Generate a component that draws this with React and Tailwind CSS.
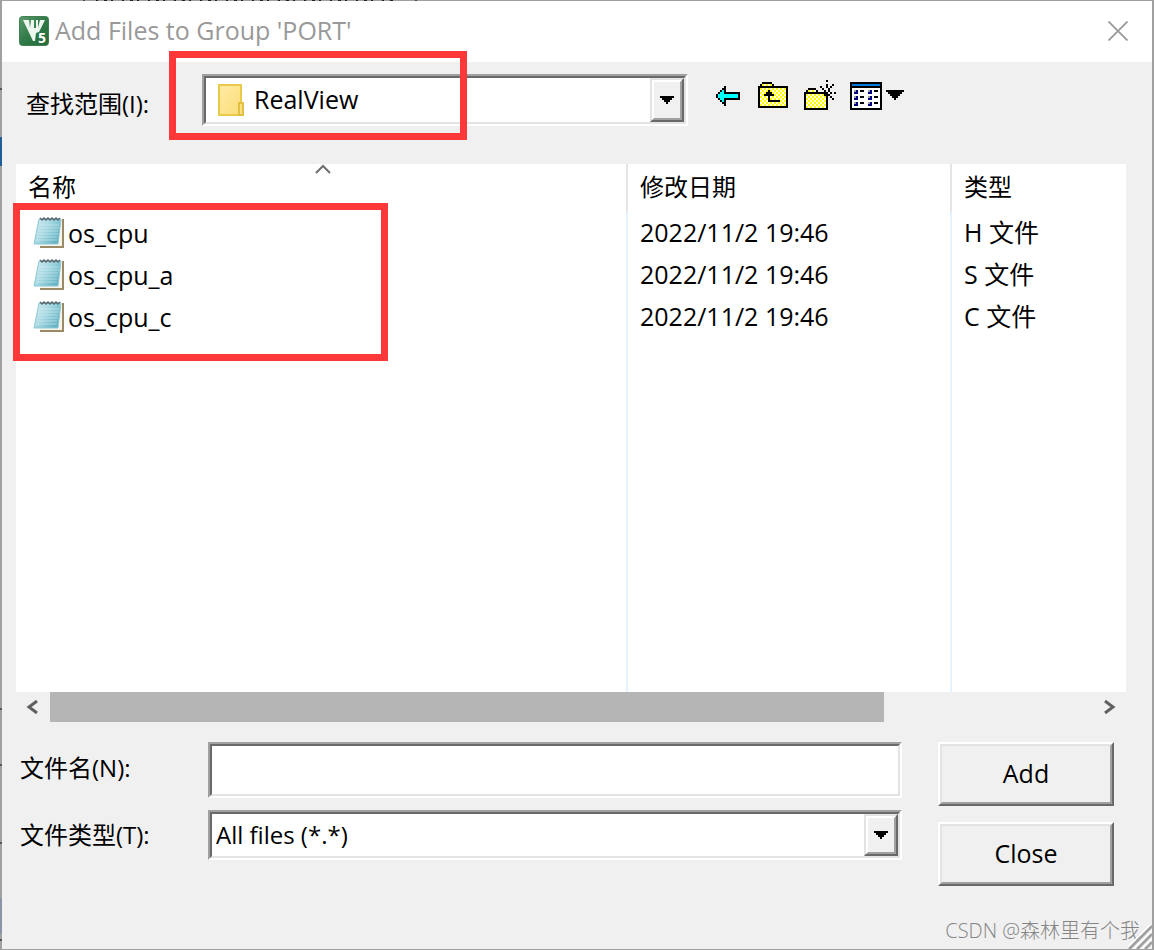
import { useState } from "react";

const FILES = [
  { name: "os_cpu", date: "2022/11/2 19:46", type: "H 文件" },
  { name: "os_cpu_a", date: "2022/11/2 19:46", type: "S 文件" },
  { name: "os_cpu_c", date: "2022/11/2 19:46", type: "C 文件" },
];

const PALETTE = {
  K: "#000000",
  C: "#00ffff",
  Y: "#ffff00",
  L: "#fffbe0",
  W: "#ffffff",
  B: "#0078d7",
  N: "#000080",
  G: "#a0a0a0",
};

const BACK = [
  "",
  "",
  "",
  "......K",
  ".....KK",
  "....KCK",
  "...KCCKKKKKKKK",
  "..KCCCCCCCCCCK",
  "..KCCCCCCCCCCK",
  "...KCCKKKKKKKK",
  "....KCK",
  ".....KK",
  "......K",
];

const UP = [
  "",
  "..KKKKK",
  ".KYLYLYK",
  "KKKKKKKKKKKKKKK",
  "KYLYLYLYLYLYLYK",
  "KLYLYKYLYLYLYLK",
  "KYLYKKKYLYLYLYK",
  "KLYKKKKKYLYLYLK",
  "KYLYLKLYLYLYLYK",
  "KLYLYKYLYLYLYLK",
  "KYLYLKKKKKKYLYK",
  "KLYLYLYLYLYLYLK",
  "KYLYLYLYLYLYLYK",
  "KKKKKKKKKKKKKKK",
];

const NEW_FOLDER = [
  "...........K",
  "",
  "...........K..K",
  "........K..K.K",
  "..KKKK...K..K",
  ".KYLYLK...K.K",
  "KKKKKKKKKKKK.K.K",
  "KYLYLYLYLYKKK",
  "KLYLYLYLYLYK.K",
  "KYLYLYLYLYLK..K",
  "KLYLYLYLYLYK",
  "KYLYLYLYLYLK",
  "KLYLYLYLYLYK",
  "KYLYLYLYLYLK",
  "KKKKKKKKKKKK",
];

const VIEW = [
  "",
  "KKKKKKKKKKKKKKKK",
  "KBBBBBBBBBBBBBBK",
  "KKKKKKKKKKKKKKKK",
  "KWWWWWWWWWWWWWWK",
  "KWGNWKKWWGNWKKWK..KKKKKKKKK",
  "KWNNWWWWWNNWWWWK...KKKKKKK",
  "KWWWWWWWWWWWWWWK....KKKKK",
  "KWGNWKKWWGNWKKWK.....KKK",
  "KWNNWWWWWNNWWWWK......K",
  "KWWWWWWWWWWWWWWK",
  "KWGNWKKWWGNWKKWK",
  "KWNNWWWWWNNWWWWK",
  "KWWWWWWWWWWWWWWK",
  "KKKKKKKKKKKKKKKK",
];

function PixelIcon({ rows, cols = 16 }) {
  return (
    <svg width={cols * 2} height="32" viewBox={`0 0 ${cols} 16`} shapeRendering="crispEdges">
      {rows.flatMap((row, y) =>
        [...row].map((c, x) =>
          c === "." ? null : <rect key={`${x}-${y}`} x={x} y={y} width="1" height="1" fill={PALETTE[c]} />
        )
      )}
    </svg>
  );
}

function LogoIcon() {
  return (
    <svg width="30" height="30" viewBox="0 0 30 30">
      <defs>
        <linearGradient id="logo" x1="0" y1="0" x2="1" y2="1">
          <stop offset="0" stopColor="#5d9a6c" />
          <stop offset="0.5" stopColor="#2f7a46" />
          <stop offset="1" stopColor="#256a3b" />
        </linearGradient>
      </defs>
      <rect x="0.5" y="0.5" width="29" height="29" rx="3" fill="url(#logo)" stroke="#3f7f52" />
      <path d="M4 4h6l1 8 1-8h3v8h2V4h2v8l2-8h5l-6 12-3 1-1 8h-2z" fill="#eef6f0" />
      <text x="19" y="27" fontSize="14" fontWeight="700" fill="#ffffff" className="font-['Open_Sans',sans-serif]">
        5
      </text>
    </svg>
  );
}

function FolderIcon() {
  return (
    <svg width="26" height="32" viewBox="0 0 26 32">
      <defs>
        <linearGradient id="folder" x1="0" y1="0" x2="1" y2="1">
          <stop offset="0" stopColor="#ffeba3" />
          <stop offset="1" stopColor="#fbdc78" />
        </linearGradient>
      </defs>
      <path d="M1 1h22v18h2v12H1z" fill="url(#folder)" stroke="#ebc94b" strokeWidth="2" />
      <path d="M21 31V19h4v12z" fill="#fbdf80" stroke="#e3bf42" strokeWidth="2" />
    </svg>
  );
}

function NotepadIcon() {
  return (
    <svg width="32" height="32" viewBox="0 0 32 32" className="shrink-0">
      <defs>
        <linearGradient id="notepad" x1="0" y1="0" x2="1" y2="0.6">
          <stop offset="0" stopColor="#d8eef3" />
          <stop offset="0.5" stopColor="#a5d8e2" />
          <stop offset="1" stopColor="#62b2c4" />
        </linearGradient>
      </defs>
      <path d="M8 3h22v27H8z" fill="#f7f4ee" />
      <path d="M31 2v28H8" fill="none" stroke="#9a8b66" strokeWidth="2" />
      <path d="M7 2h22l-3 25H2z" fill="url(#notepad)" stroke="#8fc9d6" strokeWidth="1" />
      <path d="M7 8h20M6 11h21M6 14h20M5 17h21M5 20h20M4 23h21" stroke="#e3f3f6" strokeOpacity="0.5" />
      <path d="M8 1l2 2 2-2 2 2 2-2 2 2 2-2 2 2 2-2 2 2 2-2" fill="none" stroke="#56666b" strokeWidth="1.5" />
    </svg>
  );
}

function DropArrow() {
  return (
    <span className="pointer-events-none absolute inset-y-0 right-0 flex w-[34px] border-2 border-t-[#e3e3e3] border-l-[#e3e3e3] border-r-[#696969] border-b-[#696969]">
      <span className="flex flex-1 items-center justify-center border-2 border-t-white border-l-white border-r-[#a0a0a0] border-b-[#a0a0a0] bg-[#f0f0f0]">
        <svg width="14" height="8" viewBox="0 0 7 4" shapeRendering="crispEdges">
          <path d="M0 0h7v1H0zM1 1h5v1H1zM2 2h3v1H2zM3 3h1v1H3z" />
        </svg>
      </span>
    </span>
  );
}

// Two-step sunken edge used by the text box and both drop-downs
function Sunken({ className, children }) {
  return (
    <div
      className={`border-2 border-t-[#a0a0a0] border-l-[#a0a0a0] border-r-white border-b-white ${className}`}
    >
      <div className="relative flex h-full border-2 border-t-[#696969] border-l-[#696969] border-r-[#e3e3e3] border-b-[#e3e3e3] bg-white">
        {children}
      </div>
    </div>
  );
}

function PushButton({ children }) {
  return (
    <button
      type="button"
      className="flex h-16 w-44 border-2 border-t-white border-l-white border-r-[#696969] border-b-[#696969] text-[25px]"
    >
      <span className="flex h-full flex-1 items-center justify-center border-2 border-t-[#e3e3e3] border-l-[#e3e3e3] border-r-[#a0a0a0] border-b-[#a0a0a0] bg-[#f0f0f0] pb-0.5">
        {children}
      </span>
    </button>
  );
}

function FileList() {
  return (
    <div className="relative mr-[26px] ml-3.5">
      <table className="w-full table-fixed border-separate border-spacing-0 bg-white text-left">
        <colgroup>
          <col className="w-[612px]" />
          <col className="w-[324px]" />
          <col />
        </colgroup>
        <thead>
          <tr className="h-12">
            <th className="relative border-r-2 border-[#e5e5e5] p-0 pb-0.5 pl-3 font-normal">
              名称
              <svg className="absolute top-0 left-[299px]" width="16" height="10" viewBox="0 0 16 10">
                <path d="M1 9l7-7 7 7" fill="none" stroke="#6d6d6d" strokeWidth="2" />
              </svg>
            </th>
            <th className="border-r-2 border-[#e5e5e5] p-0 pb-0.5 pl-3 font-normal">修改日期</th>
            <th className="p-0 pb-0.5 pl-3 font-normal">类型</th>
          </tr>
        </thead>
        <tbody className="text-[25px]">
          {FILES.map((file) => (
            <tr key={file.name} className="h-[42px]">
              <td className="border-r-2 border-[#e8f2fc] p-0 pl-4">
                <div className="flex items-center gap-1">
                  <NotepadIcon />
                  {file.name}
                </div>
              </td>
              <td className="border-r-2 border-[#e8f2fc] p-0 pb-0.5 pl-3">{file.date}</td>
              <td className="p-0 pb-0.5 pl-3">{file.type}</td>
            </tr>
          ))}
          <tr className="h-[354px]">
            <td className="border-r-2 border-[#e8f2fc]"></td>
            <td className="border-r-2 border-[#e8f2fc]"></td>
            <td></td>
          </tr>
        </tbody>
      </table>

      <div className="flex h-[30px] items-center">
        <button type="button" aria-label="Scroll left" className="flex w-[34px] justify-start pl-2.5">
          <svg width="12" height="14" viewBox="0 0 12 14">
            <path d="M11 1L3 7l8 6" fill="none" stroke="#606060" strokeWidth="3" />
          </svg>
        </button>
        <div className="h-full flex-1">
          <div className="h-full w-4/5 bg-[#b5b5b5]"></div>
        </div>
        <button type="button" aria-label="Scroll right" className="flex w-[34px] justify-end pr-2.5">
          <svg width="12" height="14" viewBox="0 0 12 14">
            <path d="M1 1l8 6-8 6" fill="none" stroke="#606060" strokeWidth="3" />
          </svg>
        </button>
      </div>

      <div className="pointer-events-none absolute top-[39px] -left-[3px] h-[158px] w-[375px] border-7 border-[#fc3838]"></div>
    </div>
  );
}

// Bits of the window behind that show past the dialog's edge
function EdgeStrips() {
  return (
    <>
      <svg className="absolute -top-px -left-0.5" width="430" height="2">
        <path d="M84 0v1" stroke="#444444" strokeWidth="2" />
        <path d="M96 0.5H396" stroke="#222222" strokeDasharray="2 6 3 4 2 9" />
        <path d="M416 0v1" stroke="#444444" strokeWidth="2" />
      </svg>
      <svg className="absolute top-0 -left-0.5" width="2" height="948">
        <path d="M1 136v29" stroke="#1f5f99" strokeWidth="2" />
        <path d="M1 87v2M1 707v2M1 763v2M1 841v2M1 938v2" stroke="#555555" strokeWidth="2" />
        <path d="M1 897v36" stroke="#8a94a8" strokeWidth="2" />
      </svg>
    </>
  );
}

function App() {
  const [fileName, setFileName] = useState("");

  return (
    <div className="relative flex min-h-screen flex-col border-x-2 border-y border-[#a0a0a0] bg-[#f0f0f0] font-['Open_Sans','Noto_Sans_CJK_SC',sans-serif] text-2xl leading-8 text-black">
      <header className="flex h-[61px] items-center gap-1.5 bg-white pr-6 pb-0.5 pl-[17px]">
        <LogoIcon />
        <h1 className="flex-1 pb-0.5 text-[25px] text-[#999999]">Add Files to Group 'PORT'</h1>
        <button type="button" aria-label="Close dialog">
          <svg width="20" height="20" viewBox="0 0 20 20">
            <path d="M0.5 0.5l19 19M19.5 0.5l-19 19" stroke="#999999" strokeWidth="1.8" />
          </svg>
        </button>
      </header>

      <div className="flex h-[102px] items-start pt-3 pl-6">
        <label htmlFor="look-in" className="w-44 pt-3.5">
          查找范围(I):
        </label>
        <div className="relative w-[486px]">
          <Sunken className="h-[52px]">
            <span className="pointer-events-none absolute inset-y-0 left-3 flex items-center">
              <FolderIcon />
            </span>
            <select
              id="look-in"
              className="w-full appearance-none bg-transparent pr-9 pb-0.5 pl-12 text-[25px] outline-none"
            >
              <option>RealView</option>
            </select>
            <DropArrow />
          </Sunken>
          <div className="pointer-events-none absolute -top-[23px] -left-[33px] h-[89px] w-[298px] border-7 border-[#fc3838]"></div>
        </div>
        <div className="flex gap-3.5 pt-1.5 pl-6">
          <button type="button" aria-label="Back">
            <PixelIcon rows={BACK} />
          </button>
          <button type="button" aria-label="Up one level">
            <PixelIcon rows={UP} />
          </button>
          <button type="button" aria-label="New folder">
            <PixelIcon rows={NEW_FOLDER} />
          </button>
          <button type="button" aria-label="View menu">
            <PixelIcon rows={VIEW} cols={27} />
          </button>
        </div>
      </div>

      <FileList />

      <div className="flex items-start gap-9 pt-5 pr-[38px] pl-[18px]">
        <div className="flex flex-1 flex-col gap-3">
          <div className="flex items-center">
            <label htmlFor="file-name" className="w-[188px] pb-1">
              文件名(N):
            </label>
            <Sunken className="h-14 flex-1">
              <input
                id="file-name"
                type="text"
                value={fileName}
                onChange={(e) => setFileName(e.target.value)}
                className="w-full px-1 outline-none"
              />
            </Sunken>
          </div>
          <div className="flex items-center">
            <label htmlFor="file-type" className="w-[188px]">
              文件类型(T):
            </label>
            <Sunken className="h-[50px] flex-1">
              <select id="file-type" className="w-full appearance-none bg-transparent pr-9 pl-1 outline-none">
                <option>All files (*.*)</option>
              </select>
              <DropArrow />
            </Sunken>
          </div>
        </div>
        <div className="flex flex-col gap-4">
          <PushButton>Add</PushButton>
          <PushButton>Close</PushButton>
        </div>
      </div>

      <footer className="mt-auto flex justify-end pr-3 pb-0.5 text-xl leading-8 font-light text-[#858585]">
        CSDN @森林里有个我
      </footer>
      <svg className="absolute right-0 bottom-0" width="24" height="24" viewBox="0 0 24 24">
        <path d="M1 24L24 1M9 24L24 9M17 24l7-7" stroke="#a0a0a0" strokeWidth="3" />
        <path d="M-2 24L24-2M6 24L24 6M14 24l10-10" stroke="#ffffff" strokeWidth="1.5" />
      </svg>
      <EdgeStrips />
    </div>
  );
}

export default App;
